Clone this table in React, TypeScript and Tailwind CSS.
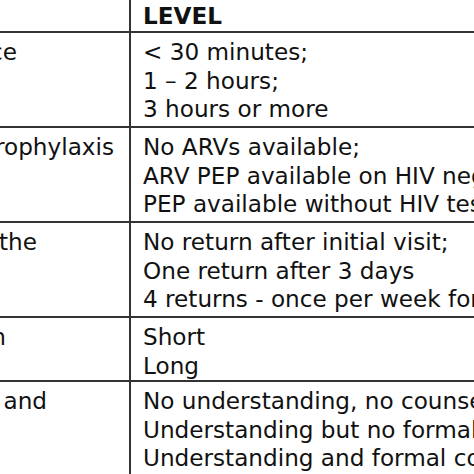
const ROWS = [
  {
    label: 'Distance',
    end: 'w-[17px]',
    pad: 'pb-[2.5px]',
    levels: ['< 30 minutes;', '1 – 2 hours;', '3 hours or more'],
  },
  {
    label: 'Post-exposure prophylaxis',
    end: 'w-[114px]',
    pad: 'pb-[2.5px]',
    levels: [
      'No ARVs available;',
      'ARV PEP available on HIV negative test;',
      'PEP available without HIV testing',
    ],
  },
  {
    label: 'Follow-up after the',
    end: 'w-[37px]',
    pad: 'pb-[2.5px]',
    levels: [
      'No return after initial visit;',
      'One return after 3 days',
      '4 returns - once per week for a month',
    ],
  },
  {
    label: 'Duration',
    end: 'w-[6px]',
    pad: 'pb-0',
    levels: ['Short', 'Long'],
  },
  {
    label: 'Understanding and',
    end: 'w-[47px]',
    pad: 'pb-[2.5px]',
    levels: [
      'No understanding, no counselling',
      'Understanding but no formal counselling',
      'Understanding and formal counselling',
    ],
  },
];

export default function App() {
  return (
    <div className="w-[474px] h-[474px] overflow-hidden bg-white text-[#111] font-['DejaVu_Sans',sans-serif] text-[23.15px] leading-[28.5px]">
      {/* Header */}
      <div className="flex border-b-2 border-[#333]">
        <div className="w-[131px] shrink-0 border-r-2 border-[#333]" />
        <div className="pl-[12px] pt-[2px] h-[31px] font-bold whitespace-nowrap">LEVEL</div>
      </div>

      {/* Factor rows */}
      {ROWS.map(row => (
        <div key={row.label} className="flex border-b-2 border-[#333]">
          <div className={`w-[131px] shrink-0 pt-[5px] ${row.pad} border-r-2 border-[#333]`}>
            <div className={`${row.end} flex justify-end whitespace-nowrap`}>
              <span>{row.label}</span>
            </div>
          </div>
          <div className={`pl-[12px] pt-[5px] ${row.pad} flex-1 min-w-0 whitespace-nowrap overflow-hidden`}>
            {row.levels.map(l => (
              <div key={l}>{l}</div>
            ))}
          </div>
        </div>
      ))}
    </div>
  );
}
